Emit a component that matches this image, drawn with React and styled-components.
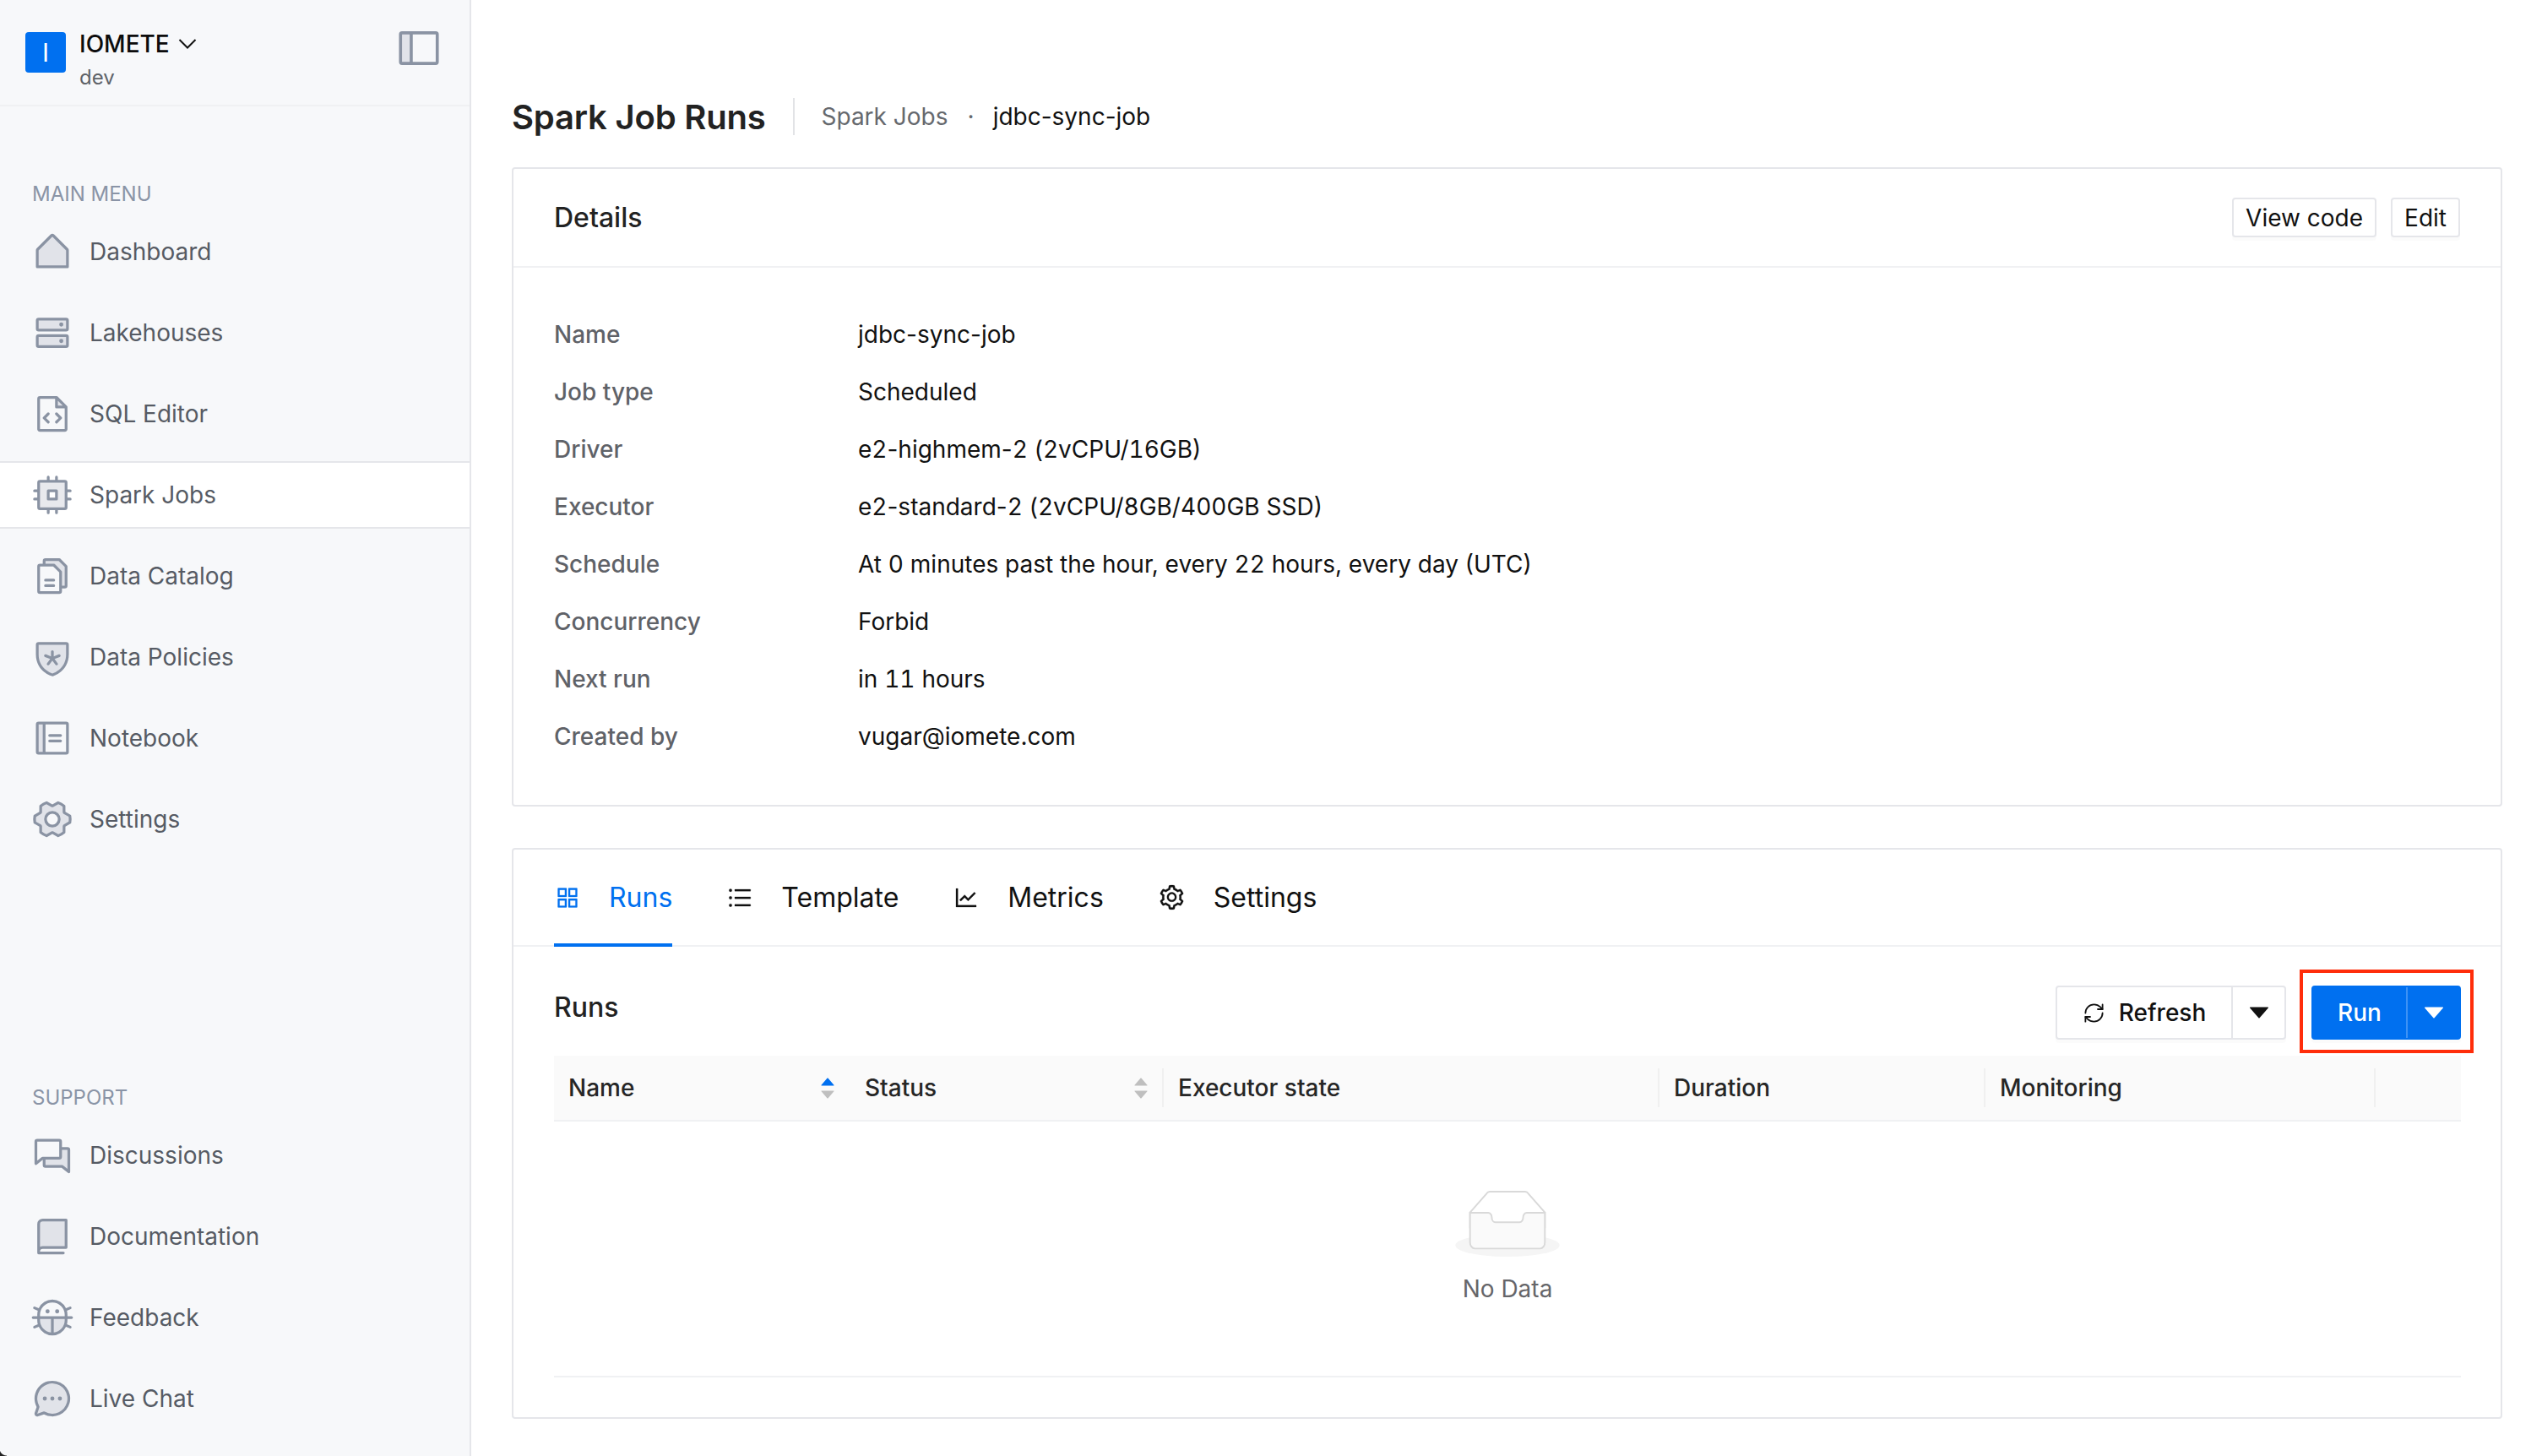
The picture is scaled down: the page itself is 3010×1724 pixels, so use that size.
import React from 'react'
import styled, { createGlobalStyle } from 'styled-components'
import {
  PiHouseSimpleDuotone, PiHardDrivesDuotone, PiFileCodeDuotone, PiCpuDuotone, PiFilesDuotone,
  PiShieldStarDuotone, PiNotebookDuotone, PiGearSixDuotone, PiChatsDuotone, PiBookDuotone,
  PiBugDuotone, PiChatCircleDotsDuotone, PiSidebarSimpleDuotone,
} from 'react-icons/pi'
import {
  AiOutlineAppstore, AiOutlineUnorderedList, AiOutlineLineChart, AiOutlineSetting,
  AiFillCaretDown, AiFillCaretUp,
} from 'react-icons/ai'
import { RefreshCw } from 'lucide-react'

const GlobalStyle = createGlobalStyle`
  * { box-sizing: border-box; }
  html, body { margin: 0; padding: 0; background: #fff; }
  body { font-family: Inter, "Liberation Sans", sans-serif; color: #111; }
`

const Page = styled.div`
  display: flex;
  width: 3010px;
  height: 1724px;
  overflow: hidden;
  position: relative;
`

const Sidebar = styled.aside`
  width: 558px;
  flex: none;
  display: flex;
  flex-direction: column;
  background: #f7f8fa;
  border-right: 2px solid #e5e6ea;
`

const SideHeader = styled.div`
  height: 126px;
  flex: none;
  display: flex;
  padding: 38px 31px 0 30px;
  border-bottom: 2px solid #f0f1f3;
`

const Logo = styled.div`
  width: 48px;
  height: 48px;
  flex: none;
  display: flex;
  align-items: center;
  justify-content: center;
  border-radius: 4px;
  background: #0070f0;
  color: #fff;
  font-size: 30px;
`

const Brand = styled.div`
  margin: -6px 0 0 16px;
`

const BrandName = styled.div`
  display: flex;
  align-items: center;
  gap: 10px;
  height: 40px;
  font-size: 28px;
  font-weight: 500;
  color: #0c0c0c;
`

const BrandEnv = styled.div`
  height: 36px;
  margin-top: 2px;
  line-height: 36px;
  font-size: 24px;
  color: #5f6368;
`

const PanelToggle = styled.div`
  margin: -10px 0 0 auto;
  height: 58px;
  color: #8a93a3;
`

const Group = styled.div`
  display: flex;
  flex-direction: column;
  margin-top: ${p => p.$top || 0};
  padding-bottom: ${p => p.$bottom || 0};
`

const GroupLabel = styled.div`
  height: 37px;
  line-height: 38px;
  margin: 0 0 10px 38px;
  font-size: 24px;
  color: #8a94a6;
`

const NavItem = styled.div`
  height: 80px;
  margin-bottom: 16px;
  display: flex;
  align-items: center;
  gap: 18px;
  padding-left: 36px;
  font-size: 28px;
  color: #565b64;
  background: ${p => (p.$active ? '#fff' : 'transparent')};
  border-top: 2px solid ${p => (p.$active ? '#e5e6ea' : 'transparent')};
  border-bottom: 2px solid ${p => (p.$active ? '#e5e6ea' : 'transparent')};

  svg {
    flex: none;
    color: #8a93a3;
  }
`

const Main = styled.main`
  flex: 1;
  min-width: 0;
  display: flex;
  flex-direction: column;
  padding: 116px 47px 0 48px;
`

const PageHead = styled.div`
  height: 44px;
  margin-bottom: 38px;
  display: flex;
  align-items: center;
  font-size: 28px;
`

const PageTitle = styled.h1`
  margin: 0;
  font-size: 40px;
  font-weight: 600;
  letter-spacing: -0.2px;
  color: #222;
`

const HeadDivider = styled.span`
  width: 2px;
  height: 44px;
  margin: 0 32px;
  background: #e2e3e6;
`

const CrumbLink = styled.span`
  color: #66696e;
`

const CrumbDot = styled.span`
  margin: 0 22px 0 23px;
  color: #66696e;
`

const CrumbCurrent = styled.span`
  color: #111;
`

const Card = styled.section`
  border: 2px solid #e5e6ea;
  border-radius: 4px;
  margin-bottom: ${p => p.$gap || 0};
`

const CardHeader = styled.div`
  height: 117px;
  display: flex;
  align-items: center;
  justify-content: space-between;
  padding: 0 48px;
  border-bottom: 2px solid #f0f1f3;
`

const CardTitle = styled.h2`
  margin: 0;
  font-size: 32px;
  font-weight: 500;
  color: #222;
`

const HeaderActions = styled.div`
  display: flex;
  gap: 17px;
`

const Button = styled.button`
  height: 47px;
  padding: 0 14px;
  font: inherit;
  font-size: 28px;
  color: #111;
  background: #fff;
  border: 2px solid #e5e6ea;
  border-radius: 4px;
  box-shadow: 0 4px 0 rgba(0, 0, 0, 0.016);
`

const DetailList = styled.div`
  display: flex;
  flex-direction: column;
  gap: 24px;
  padding: 57px 48px 59px;
`

const DetailRow = styled.div`
  display: flex;
  height: 44px;
  align-items: center;
  font-size: 28px;
`

const DetailLabel = styled.span`
  width: 360px;
  flex: none;
  font-weight: 500;
  color: #5f6268;
`

const DetailValue = styled.span`
  color: #111;
`

const Digits = styled.span`
  font-variant-numeric: tabular-nums;
`

const TabBar = styled.div`
  height: 115px;
  display: flex;
  gap: 64px;
  padding: 0 48px;
  border-bottom: 2px solid #f0f1f3;
`

const Tab = styled.div`
  height: 115px;
  padding-bottom: 2px;
  display: flex;
  align-items: center;
  gap: 33px;
  font-size: 32px;
  color: ${p => (p.$active ? '#0070f0' : '#111')};
  box-shadow: ${p => (p.$active ? 'inset 0 -4px 0 #0070f0' : 'none')};

  svg {
    stroke: currentColor;
    stroke-width: 8px;
  }
`

const RunsBar = styled.div`
  display: flex;
  align-items: flex-start;
  justify-content: space-between;
  padding: 46px 47px 0 48px;
  margin-bottom: 19px;
`

const RunsTitle = styled.h3`
  margin: 0;
  line-height: 52px;
  font-size: 32px;
  font-weight: 500;
  color: #222;
`

const RunsActions = styled.div`
  display: flex;
  gap: 30px;
`

const SplitButton = styled.div`
  position: relative;
  display: flex;
  height: 64px;
  border-radius: 4px;
  box-shadow: 0 4px 0 rgba(0, 0, 0, 0.016);
  font-size: 28px;
  font-weight: 500;
  color: ${p => (p.$primary ? '#fff' : '#111')};
  background: ${p => (p.$primary ? '#0070f0' : '#fff')};
  border: 2px solid ${p => (p.$primary ? '#0070f0' : '#e5e6ea')};
`

const SplitMain = styled.div`
  display: flex;
  align-items: center;
  justify-content: center;
  gap: 16px;
  width: ${p => p.$width};
  border-right: 2px solid ${p => (p.$primary ? '#3d92f5' : '#e5e6ea')};
`

const SplitCaret = styled.div`
  width: 61px;
  display: flex;
  align-items: center;
  justify-content: center;
`

const Highlight = styled.div`
  position: absolute;
  inset: -21px -17px -18px -16px;
  border: 4px solid #ff2d0a;
  pointer-events: none;
`

const TableBlock = styled.div`
  margin: 0 47px 47px 48px;
  border-bottom: 2px solid #f0f1f3;
`

const TableHead = styled.div`
  display: grid;
  grid-template-columns: 351px 371px 587px 386px 462px 1fr;
  height: 78px;
  align-items: center;
  background: #fafafa;
  border-bottom: 2px solid #f0f1f3;
`

const HeadCell = styled.div`
  position: relative;
  display: flex;
  align-items: center;
  justify-content: space-between;
  height: 44px;
  padding: 0 16px 0 17px;
  font-size: 28px;
  font-weight: 500;
  color: #262626;

  &::after {
    content: '';
    display: ${p => (p.$noLine ? 'none' : 'block')};
    position: absolute;
    right: 0;
    top: -1px;
    width: 2px;
    height: 46px;
    background: #f0f0f0;
  }
`

const Sorter = styled.span`
  display: flex;
  flex-direction: column;
  align-items: center;
  color: #bfbfbf;

  svg + svg {
    margin-top: -7px;
  }
`

const Empty = styled.div`
  height: 301px;
  padding-top: 81px;
  display: flex;
  flex-direction: column;
  align-items: center;
`

const EmptyText = styled.div`
  margin-top: 16px;
  line-height: 44px;
  font-size: 28px;
  color: #66666a;
`

const ScreenCorner = styled.div`
  position: absolute;
  left: 0;
  bottom: 0;
  width: 8px;
  height: 9px;
  background: radial-gradient(circle at 100% 0, transparent 8px, #222 9px);
`

const mainMenu = [
  { label: 'Dashboard', Icon: PiHouseSimpleDuotone },
  { label: 'Lakehouses', Icon: PiHardDrivesDuotone },
  { label: 'SQL Editor', Icon: PiFileCodeDuotone },
  { label: 'Spark Jobs', Icon: PiCpuDuotone, active: true },
  { label: 'Data Catalog', Icon: PiFilesDuotone },
  { label: 'Data Policies', Icon: PiShieldStarDuotone },
  { label: 'Notebook', Icon: PiNotebookDuotone },
  { label: 'Settings', Icon: PiGearSixDuotone },
]

const supportMenu = [
  { label: 'Discussions', Icon: PiChatsDuotone },
  { label: 'Documentation', Icon: PiBookDuotone },
  { label: 'Feedback', Icon: PiBugDuotone },
  { label: 'Live Chat', Icon: PiChatCircleDotsDuotone },
]

const details = [
  ['Name', 'jdbc-sync-job'],
  ['Job type', 'Scheduled'],
  ['Driver', 'e2-highmem-2 (2vCPU/16GB)'],
  ['Executor', 'e2-standard-2 (2vCPU/8GB/400GB SSD)'],
  ['Schedule', 'At 0 minutes past the hour, every 22 hours, every day (UTC)'],
  ['Concurrency', 'Forbid'],
  ['Next run', 'in 11 hours'],
  ['Created by', 'vugar@iomete.com'],
]

const tabs = [
  { label: 'Runs', Icon: AiOutlineAppstore, iconSize: 32, active: true },
  { label: 'Template', Icon: AiOutlineUnorderedList, iconSize: 32 },
  { label: 'Metrics', Icon: AiOutlineLineChart, iconSize: 32 },
  { label: 'Settings', Icon: AiOutlineSetting, iconSize: 33 },
]

// digits run wide in the reference, hyphens and slashes do not
const withDigits = text =>
  text.split(/(\d+)/).map((part, i) => (i % 2 ? <Digits key={i}>{part}</Digits> : part))

const SortIcon = ({ active }) => (
  <Sorter>
    <AiFillCaretUp size={22} color={active ? '#0070f0' : undefined} />
    <AiFillCaretDown size={22} />
  </Sorter>
)

const EmptyIcon = () => (
  <svg width="124" height="79" viewBox="0 0 64 41">
    <g transform="translate(0 1)" fill="none" fillRule="evenodd">
      <ellipse fill="#f5f5f5" cx="32" cy="33" rx="32" ry="7" />
      <g fillRule="nonzero" stroke="#d9d9d9">
        <path d="M55 12.76L44.854 1.258C44.367.474 43.656 0 42.907 0H21.093c-.749 0-1.46.474-1.947 1.257L9 12.761V22h46v-9.24z" />
        <path
          d="M41.613 15.931c0-1.605.994-2.93 2.227-2.931H55v18.137C55 33.26 53.68 35 52.05 35h-40.1C10.32 35 9 33.259 9 31.137V13h11.16c1.233 0 2.227 1.323 2.227 2.928v.022c0 1.605 1.005 2.901 2.237 2.901h14.752c1.232 0 2.237-1.308 2.237-2.913v-.007z"
          fill="#fafafa"
        />
      </g>
    </g>
  </svg>
)

const MenuItems = ({ items }) =>
  items.map(({ label, Icon, active }) => (
    <NavItem key={label} $active={active}>
      <Icon size={52} />
      {label}
    </NavItem>
  ))

export default function App() {
  return (
    <Page>
      <GlobalStyle />
      <Sidebar>
        <SideHeader>
          <Logo>I</Logo>
          <Brand>
            <BrandName>
              IOMETE
              <svg width="22" height="12" viewBox="0 0 22 12">
                <polyline points="1.5,1 11,10.5 20.5,1" fill="none" stroke="#111" strokeWidth="2" />
              </svg>
            </BrandName>
            <BrandEnv>dev</BrandEnv>
          </Brand>
          <PanelToggle>
            <PiSidebarSimpleDuotone size={58} />
          </PanelToggle>
        </SideHeader>
        <Group $top="85px">
          <GroupLabel>MAIN MENU</GroupLabel>
          <MenuItems items={mainMenu} />
        </Group>
        <Group $top="auto" $bottom="12px">
          <GroupLabel>SUPPORT</GroupLabel>
          <MenuItems items={supportMenu} />
        </Group>
      </Sidebar>

      <Main>
        <PageHead>
          <PageTitle>Spark Job Runs</PageTitle>
          <HeadDivider />
          <CrumbLink>Spark Jobs</CrumbLink>
          <CrumbDot>·</CrumbDot>
          <CrumbCurrent>jdbc-sync-job</CrumbCurrent>
        </PageHead>

        <Card $gap="49px">
          <CardHeader>
            <CardTitle>Details</CardTitle>
            <HeaderActions>
              <Button>View code</Button>
              <Button>Edit</Button>
            </HeaderActions>
          </CardHeader>
          <DetailList>
            {details.map(([label, value]) => (
              <DetailRow key={label}>
                <DetailLabel>{label}</DetailLabel>
                <DetailValue>{withDigits(value)}</DetailValue>
              </DetailRow>
            ))}
          </DetailList>
        </Card>

        <Card>
          <TabBar>
            {tabs.map(({ label, Icon, iconSize, active }) => (
              <Tab key={label} $active={active}>
                <Icon size={iconSize} />
                {label}
              </Tab>
            ))}
          </TabBar>
          <RunsBar>
            <RunsTitle>Runs</RunsTitle>
            <RunsActions>
              <SplitButton>
                <SplitMain $width="208px">
                  <RefreshCw size={27} strokeWidth={1.6} />
                  Refresh
                </SplitMain>
                <SplitCaret>
                  <AiFillCaretDown size={32} />
                </SplitCaret>
              </SplitButton>
              <SplitButton $primary>
                <SplitMain $primary $width="112px">
                  Run
                </SplitMain>
                <SplitCaret>
                  <AiFillCaretDown size={32} />
                </SplitCaret>
                <Highlight />
              </SplitButton>
            </RunsActions>
          </RunsBar>
          <TableBlock>
            <TableHead>
              <HeadCell $noLine>
                Name
                <SortIcon active />
              </HeadCell>
              <HeadCell>
                Status
                <SortIcon />
              </HeadCell>
              <HeadCell>Executor state</HeadCell>
              <HeadCell>Duration</HeadCell>
              <HeadCell>Monitoring</HeadCell>
              <HeadCell $noLine />
            </TableHead>
            <Empty>
              <EmptyIcon />
              <EmptyText>No Data</EmptyText>
            </Empty>
          </TableBlock>
        </Card>
      </Main>
      <ScreenCorner />
    </Page>
  )
}
